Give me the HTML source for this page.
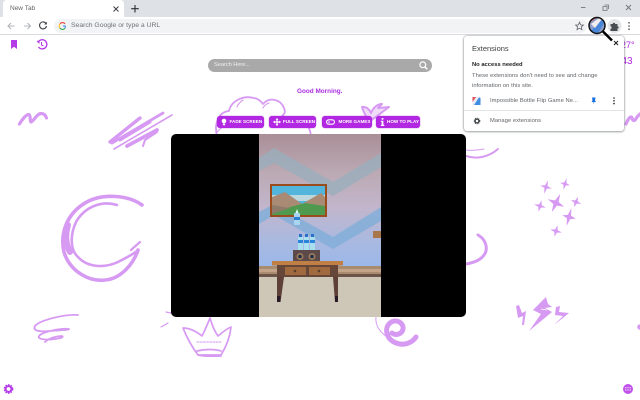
<!DOCTYPE html>
<html><head><meta charset="utf-8"><style>
html,body{margin:0;padding:0;width:640px;height:400px;overflow:hidden;background:#fff;font-family:"Liberation Sans",sans-serif}
#p{position:absolute;left:0;top:0;width:640px;height:400px;overflow:hidden;background:#fff;filter:blur(.3px)}
.a{position:absolute}
.btn{position:absolute;top:116px;height:12px;background:#b127e2;border-radius:3px;color:#fff;font-size:4.6px;font-weight:bold;line-height:12px;box-shadow:0 0 1px #a020d0;white-space:nowrap}
.t{position:absolute;white-space:nowrap}
</style></head><body><div id="p">
<svg class="a" style="left:0;top:0" width="640" height="400" viewBox="0 0 640 400">
<g fill="none" stroke="#d79af2" stroke-linecap="round" stroke-linejoin="round">
<!-- M scribble -->
<path d="M19.500 124C23 118 27 114 29 114.500C31 116 29.500 121 31 122C33 122 37 113.500 41 113.500C44 113.500 45.500 115 46.500 118" stroke-width="3.200"/>
<path d="M626 124C628 119 631 115 632 118C633 122 635 121 637 117L640 114" stroke-width="3.200"/>
<!-- hatch -->
<path d="M110 142L140 118" stroke-width="3.400"/>
<path d="M112 143L163 113" stroke-width="2.800"/>
<path d="M114 149L172 115" stroke-width="1.600"/>
<path d="M127 146L157 130" stroke-width="3.800"/>
<path d="M120 140L150 122" stroke-width="3"/>
<path d="M143 146L145 140L157 132" stroke-width="2"/>
<!-- big C -->
<path d="M142 205C128 195 100 192 82 205C66 216 60 235 64 252C70 272 90 282 105 280C120 279 133 265 138 250" stroke-width="3.600"/>
<path d="M117 205C100 200 84 208 76 222C70 235 70 250 78 257C88 268 105 268 118 262C126 258 134 254 138 250" stroke-width="2.600"/>
<path d="M68 225C65 235 66 245 70 252" stroke-width="6"/>
<path d="M140 242L131 250" stroke-width="2.200"/>
<!-- squiggle -->
<path d="M78 315C65 314 40 320 35 326C32 331 40 332 50 331C60 330 70 330 69 329C60 328 42 332 39 336C37 340 48 340 55 339C62 338 64 337 62 336C55 336 48 339 45 342" stroke-width="1.800"/>
<!-- crown -->
<path d="M183 328C190 328 197 332 202 336C205 330 208 323 210 318C212 325 215 332 218 336C222 333 226 329 231 327C230 337 226 347 221 355L198 355C192 347 187 338 183 328Z" stroke-width="1.700"/>
<path d="M197 351C205 349 215 349 221 351M198 355C205 357 215 356 221 356" stroke-width="1.700"/>
<path d="M197 342H221" stroke-width="1" stroke-dasharray="2 1.200"/>
<!-- marks below game -->
<path d="M166 312L171 313M161 327L168 323" stroke-width="1.200"/>
<!-- cloud -->
<path d="M217 135C214 125 218 112 229 111C231 101 243 95 254 98C260 99 262 103 263 104C270 96 281 100 284 108C286 113 284 114 282 116C285 118 295 118 304 122C309 125 310 131 311 135" stroke-width="1.800"/>
<path d="M243 100C240 102 238 104 237 107M269 103C266 104 264 106 263 108M215 135C219 129 222 127 225 126" stroke-width="1.100"/>
<!-- heart -->
<path d="M362 107C364 114 367 117 369 122C372 119 378 116 381 113L389 107L378 108L382 104C377 104 373 108 371 113C370 110 366 106 362 107Z" stroke-width="2" fill="#efdcf9"/>
<!-- right arcs -->
<path d="M466 150C472 151 478 150 484 149" stroke-width="1"/>
<path d="M466 156C478 160 490 156 498 149" stroke-width="2"/>
<path d="M478 235C487 240 488 250 484 255C480 261 472 263 466 264" stroke-width="3"/>
<!-- e swirl -->
<path d="M376 317C375 326 380 332 387 337" stroke-width="1"/>
<path d="M416 337C412 343 404 346 396 343C386 339 384 328 390 323C396 318 404 323 403 329C402 334 396 336 392 333" stroke-width="5"/>
<circle cx="640" cy="327" r="2.800" fill="#d79af2" stroke="none"/>
</g>
<!-- stars -->
<g fill="#d79af2">
<path id="s1" transform="translate(546,187) rotate(15)" d="M0 -7L1.300 -1.300L6 0L1.300 1.300L0 7L-1.300 1.300L-6 0L-1.300 -1.300Z"/>
<path transform="translate(565,184) rotate(15)" d="M0 -6L1.200 -1.200L5 0L1.200 1.200L0 6L-1.200 1.200L-5 0L-1.200 -1.200Z"/>
<path transform="translate(556,203) rotate(25)" d="M0 -10L2 -2L9 0L2 2L0 10L-2 2L-9 0L-2 -2Z"/>
<path transform="translate(576,202) rotate(20)" d="M0 -5.500L1.300 -1.300L5.500 0L1.300 1.300L0 5.500L-1.300 1.300L-5.500 0L-1.300 -1.300Z"/>
<path transform="translate(540,206) rotate(15)" d="M0 -6L1.300 -1.300L6 0L1.300 1.300L0 6L-1.300 1.300L-6 0L-1.300 -1.300Z"/>
<path transform="translate(569,217) rotate(15)" d="M0 -9L1.700 -1.700L7 0L1.700 1.700L0 9L-1.700 1.700L-7 0L-1.700 -1.700Z"/>
<path transform="translate(556,231) rotate(15)" d="M0 -6L1.300 -1.300L6 0L1.300 1.300L0 6L-1.300 1.300L-6 0L-1.300 -1.300Z"/>
</g>
<!-- lightning -->
<g fill="#d79af2">
<path d="M516 306L519 305L522 313L526 311L524 325L522 325L523 316L518 318Z"/>
<path d="M546 297L533 310L541 314L529 331L552 312L545 308L552 307L548 304Z"/>
<path d="M556 307L560 306L559 312L569 313L554 325L563 316L555 315Z"/>
</g>
<path d="M541 309L547 310" stroke="#fff" stroke-width=".8"/>
</svg>

<!-- clipped right text -->
<div class="t" style="left:621px;top:40px;font-size:9px;color:#b127e2">27°</div>
<div class="t" style="left:621.500px;top:56px;font-size:10px;color:#b127e2">43</div>

<!-- Chrome -->
<div class="a" style="left:0;top:0;width:640px;height:17px;background:#dee1e6"></div>
<div class="a" style="left:3px;top:0;width:121px;height:17px;background:#fff;border-radius:4px 4px 0 0"></div>
<div class="a" style="left:0;top:17px;width:640px;height:18px;background:#fff;border-bottom:1px solid #dadce0;box-sizing:border-box"></div>
<div class="t" style="left:10px;top:4px;font-size:6.500px;line-height:9px;color:#5f6368">New Tab</div>
<svg class="a" style="left:0;top:0" width="640" height="35" viewBox="0 0 640 35" fill="none">
<path d="M113.500 6.500L118.500 11.500M118.500 6.500L113.500 11.500" stroke="#3c4043" stroke-width="1"/>
<path d="M135 5V12.500M131.200 8.700H138.800" stroke="#2c2f33" stroke-width="1.100"/>
<path d="M14.500 26H8M11 23L8 26L11 29" stroke="#b4b7bb" stroke-width="1.100"/>
<path d="M24 26H30.500M27.500 23L30.500 26L27.500 29" stroke="#b4b7bb" stroke-width="1.100"/>
<path d="M46 23.500A3.500 3.500 0 1 0 46.500 26" stroke="#3c4043" stroke-width="1.100"/><path d="M46.800 21.800V24.500H44.200Z" fill="#3c4043"/>
<rect x="54" y="19" width="533" height="14" rx="7" fill="#f1f3f4"/>
<path d="M65 24A2.900 2.900 0 0 0 60 24" stroke="#ea4335" stroke-width="1.100"/>
<path d="M60 24A2.900 2.900 0 0 0 60 28" stroke="#fbbc05" stroke-width="1.100"/>
<path d="M60 28A2.900 2.900 0 0 0 65 28" stroke="#34a853" stroke-width="1.100"/>
<path d="M65 28A3 3 0 0 0 65.300 26H62.800" stroke="#4285f4" stroke-width="1.100"/>
<path d="M579.500 22.200L580.600 24.900L583.400 25.100L581.300 26.900L582 29.700L579.500 28.200L577 29.700L577.700 26.900L575.600 25.100L578.400 24.900Z" stroke="#5f6368" stroke-width=".8"/>
<circle cx="614.500" cy="26" r="7" fill="#e4e5e7"/>
<path d="M610.500 24H612.800A1.200 1.200 0 0 1 615.200 24H617.500V26.200A1.200 1.200 0 0 1 617.500 28.600V31H610.500V28.800A1.200 1.200 0 0 0 610.500 26.400Z" fill="#4a4d51"/>
<circle cx="629" cy="22.800" r=".8" fill="#3c4043"/><circle cx="629" cy="26" r=".8" fill="#3c4043"/><circle cx="629" cy="29.200" r=".8" fill="#3c4043"/>
<path d="M581 7.500H585.500" stroke="#70757a" stroke-width=".9"/>
<path d="M604.500 5H608.500V9M603 6.500H607V10.500H603Z" stroke="#70757a" stroke-width=".8"/>
<path d="M626 5L631 10M631 5L626 10" stroke="#70757a" stroke-width=".9"/>
</svg>
<div class="t" style="left:71px;top:21px;font-size:6.800px;line-height:10px;color:#6f7378">Search Google or type a URL</div>

<!-- Top left page icons -->
<svg class="a" style="left:0;top:35px" width="60" height="20" viewBox="0 35 60 20" fill="none">
<path d="M11 40H17V49L14 46.800L11 49Z" fill="#b53be8"/>
<path d="M38 42.500A4.600 4.600 0 1 1 38.500 47" stroke="#b53be8" stroke-width="1.300"/>
<path d="M36.500 41L39.500 40.500L39.500 44Z" fill="#b53be8"/>
<path d="M41.500 42V45L43.500 46" stroke="#b53be8" stroke-width="1"/>
</svg>

<!-- Search -->
<div class="a" style="left:208px;top:59px;width:224px;height:13px;border-radius:7px;background:#a9a9a9"></div>
<div class="t" style="left:214px;top:61px;font-size:5.600px;line-height:9px;color:#f0f0f0">Search Here...</div>
<svg class="a" style="left:418px;top:60px" width="11" height="11" viewBox="0 0 11 11" fill="none"><circle cx="4.800" cy="4.800" r="2.900" stroke="#fff" stroke-width="1.200"/><path d="M7 7L9.300 9.300" stroke="#fff" stroke-width="1.500"/></svg>
<div class="t" style="left:297px;top:87px;font-size:6.400px;line-height:10px;font-weight:bold;color:#a92ee0">Good Morning.</div>

<!-- Buttons -->
<div class="btn" style="left:217px;width:47px"><span class="a" style="left:12.500px">FADE SCREEN</span>
<svg class="a" style="left:3px;top:2px" width="8" height="8" viewBox="0 0 8 8"><circle cx="4" cy="3" r="2.300" fill="#fff"/><rect x="2.900" y="5.500" width="2.200" height="1.800" fill="#fff"/></svg></div>
<div class="btn" style="left:269px;width:47px"><span class="a" style="left:14px">FULL SCREEN</span>
<svg class="a" style="left:3.500px;top:2px" width="8" height="8" viewBox="0 0 8 8"><path d="M4 0L5.500 1.800H4.600V3.400H6.200V2.500L8 4L6.200 5.500V4.600H4.600V6.200H5.500L4 8L2.500 6.200H3.400V4.600H1.800V5.500L0 4L1.800 2.500V3.400H3.400V1.800H2.500Z" fill="#fff"/></svg></div>
<div class="btn" style="left:322px;width:50px"><span class="a" style="left:16.500px">MORE GAMES</span>
<svg class="a" style="left:4px;top:3px" width="9" height="6" viewBox="0 0 9 6" fill="none"><rect x=".6" y=".8" width="7.800" height="4.400" rx="2.200" stroke="#fff" stroke-width="1.100"/><circle cx="3" cy="3" r=".8" fill="#fff"/></svg></div>
<div class="btn" style="left:376px;width:44px"><span class="a" style="left:11px">HOW TO PLAY</span>
<svg class="a" style="left:4px;top:2px" width="5" height="8" viewBox="0 0 5 8"><rect x="1.600" y="0" width="1.800" height="1.700" fill="#fff"/><path d="M.8 2.800H3.400V6.900H4.300V8H.8V6.900H1.600V3.900H.8Z" fill="#fff"/></svg></div>

<!-- Game -->
<div class="a" style="left:171px;top:134px;width:295px;height:183px;background:#000;border-radius:5px"></div>
<svg class="a" style="left:259px;top:134px" width="122" height="183" viewBox="259 134 122 183">
<defs><linearGradient id="w" x1="0" y1="0" x2="0" y2="1"><stop offset="0" stop-color="#a98f98"/><stop offset=".3" stop-color="#bcaab4"/><stop offset=".55" stop-color="#c2b6cc"/><stop offset=".8" stop-color="#aab9e0"/><stop offset="1" stop-color="#9ab8ea"/></linearGradient></defs>
<rect x="259" y="134" width="122" height="133" fill="url(#w)"/>
<path d="M259 158L274 148L333 182L381 153V167L333 196L274 163L259 171Z" fill="#9aaebc" opacity=".8"/>
<path d="M259 212L274 204L333 237L381 207V221L333 249L274 215L259 224Z" fill="#7faed8" opacity=".8"/>
<rect x="259" y="266" width="122" height="11" fill="#a98c70"/>
<rect x="259" y="269" width="122" height="3" fill="#c4a488"/>
<rect x="259" y="274" width="122" height="3" fill="#6d5449"/>
<rect x="259" y="277" width="122" height="40" fill="#cec7b7"/>
<!-- picture -->
<rect x="270" y="184" width="57" height="33" fill="#9b4c1c"/>
<rect x="272" y="186" width="53" height="29" fill="#53b4dc"/>
<rect x="272" y="195" width="53" height="6" fill="#bcd8dc"/>
<path d="M272 197L285 192L302 204L321 193L325 197V215H272Z" fill="#a98b75"/>
<path d="M272 212L305 203L325 206V215H272Z" fill="#4f9a4e"/>
<path d="M272 205L290 208L272 214Z" fill="#8f7b6a"/>
<!-- flying bottle -->
<rect x="294" y="213" width="6" height="12" rx="1" fill="#a9d6ee"/><rect x="294" y="217" width="6" height="3" fill="#2e7fd0"/><path d="M295.500 213L297 209L298.500 213Z" fill="#dff"/>
<!-- bottles -->
<rect x="298" y="237" width="5" height="13" fill="#a9e0f0"/><rect x="298" y="240" width="5" height="3" fill="#2a84dc"/><rect x="299" y="234" width="3" height="3" fill="#2a70c8"/>
<rect x="304" y="237" width="5" height="13" fill="#a9e0f0"/><rect x="304" y="240" width="5" height="3" fill="#2a84dc"/><rect x="305" y="234" width="3" height="3" fill="#2a70c8"/>
<rect x="310" y="237" width="5" height="13" fill="#a9e0f0"/><rect x="310" y="240" width="5" height="3" fill="#2a84dc"/><rect x="311" y="234" width="3" height="3" fill="#2a70c8"/>
<!-- speaker -->
<rect x="293" y="250" width="27" height="11" fill="#5c4a4a"/>
<circle cx="300" cy="256.500" r="3.500" fill="#9a7a5a"/><circle cx="300" cy="256.500" r="1.800" fill="#23304a"/>
<circle cx="312" cy="256.500" r="3.500" fill="#9a7a5a"/><circle cx="312" cy="256.500" r="1.800" fill="#23304a"/>
<!-- table -->
<rect x="272" y="261" width="71" height="4.500" fill="#c07f45"/>
<rect x="277" y="265" width="61" height="12" fill="#67463a"/>
<rect x="285" y="267" width="21" height="8" fill="#a06a3e"/><rect x="309" y="267" width="21" height="8" fill="#a06a3e"/>
<circle cx="295" cy="271" r="1.300" fill="#5c3e2c"/><circle cx="319" cy="271" r="1.300" fill="#5c3e2c"/>
<path d="M277 277H284L280.500 302H277Z" fill="#5e4038"/><path d="M333 277H338V302H335Z" fill="#5e4038"/>
<path d="M277 296H280.500V302H277ZM335 296H338V302H335Z" fill="#2a1a28"/>
<!-- shelf -->
<rect x="373" y="231" width="8" height="7" fill="#a9764a"/>
</svg>

<!-- Bottom icons -->
<svg class="a" style="left:0;top:380px" width="20" height="20" viewBox="0 0 20 20" fill="none"><circle cx="8.500" cy="9" r="2.900" stroke="#b53be8" stroke-width="2"/><circle cx="8.500" cy="9" r="4" stroke="#b53be8" stroke-width="1.800" stroke-dasharray="1.500 1.100"/></svg>
<svg class="a" style="left:620px;top:381px" width="16" height="16" viewBox="0 0 16 16"><circle cx="8" cy="8" r="5" fill="#c153ea"/><g fill="#fff"><circle cx="5.800" cy="6.700" r=".6"/><circle cx="8" cy="6.700" r=".6"/><circle cx="10.200" cy="6.700" r=".6"/><circle cx="5.800" cy="9" r=".6"/><circle cx="8" cy="9" r=".6"/><circle cx="10.200" cy="9" r=".6"/></g></svg>

<!-- Extensions panel -->
<div class="a" style="left:464px;top:36px;width:160px;height:95px;background:#fff;border-radius:3px;box-shadow:0 0 2px rgba(60,64,67,.6),0 1px 2px rgba(60,64,67,.3)"></div>
<div class="t" style="left:472px;top:44px;font-size:7.500px;line-height:10px;color:#3c4043">Extensions</div>
<div class="t" style="left:472px;top:61px;font-size:5.800px;line-height:8px;font-weight:bold;color:#202124">No access needed</div>
<div class="t" style="left:472px;top:71px;font-size:5.800px;line-height:10px;color:#5f6368;letter-spacing:.05px">These extensions don't need to see and change<br>information on this site.</div>
<div class="t" style="left:490px;top:97px;font-size:5.800px;line-height:9px;color:#5f6368;letter-spacing:.05px">Impossible Bottle Flip Game Ne...</div>
<div class="t" style="left:490px;top:117px;font-size:5.800px;line-height:9px;color:#5f6368;letter-spacing:.05px">Manage extensions</div>
<div class="a" style="left:464px;top:110px;width:160px;height:1px;background:#e3e4e6"></div>
<svg class="a" style="left:460px;top:90px" width="170" height="40" viewBox="460 90 170 40">
<rect x="472.500" y="97" width="8" height="8" fill="#e8eaf4"/><path d="M474 105L479 97.500L480.500 98V105Z" fill="#3f8de0"/><path d="M472.500 97H476L472.500 102Z" fill="#e0505a"/>
<path d="M592 97.500H595.500L595 100.500L596 102H594.200L593.800 104.500L593.400 102H591.500L592.500 100.500Z" fill="#1a6fe0"/>
<circle cx="614" cy="98" r=".8" fill="#202124"/><circle cx="614" cy="100.800" r=".8" fill="#202124"/><circle cx="614" cy="103.600" r=".8" fill="#202124"/>
<circle cx="477" cy="121" r="1.900" fill="none" stroke="#3c4043" stroke-width="1.300"/><circle cx="477" cy="121" r="2.800" fill="none" stroke="#3c4043" stroke-width="1" stroke-dasharray="1 .8"/>
</svg>

<!-- Magnifier overlay -->
<svg class="a" style="left:580px;top:10px" width="50" height="40" viewBox="580 10 50 40">
<defs><clipPath id="c"><circle cx="597" cy="25.500" r="8"/></clipPath></defs>
<g clip-path="url(#c)"><rect x="588" y="16" width="18" height="19" fill="#8d9fc8"/>
<path d="M588 24L598 17H588Z" fill="#d26a70"/><path d="M591 31L603 17L606 20L597 35Z" fill="#4a86d8"/><path d="M591 24L599 18L602 19L595 28Z" fill="#f2eef0"/><path d="M589 29L597 35H589Z" fill="#4f5f82"/></g>
<circle cx="597" cy="25.500" r="8" fill="none" stroke="#111" stroke-width="1.500"/>
<path d="M603 31.500L612 40.500" stroke="#000" stroke-width="2.600"/>
<path d="M614 41L618 45M618 41L614 45" stroke="#222" stroke-width="1.100"/>
</svg>
</div></body></html>
